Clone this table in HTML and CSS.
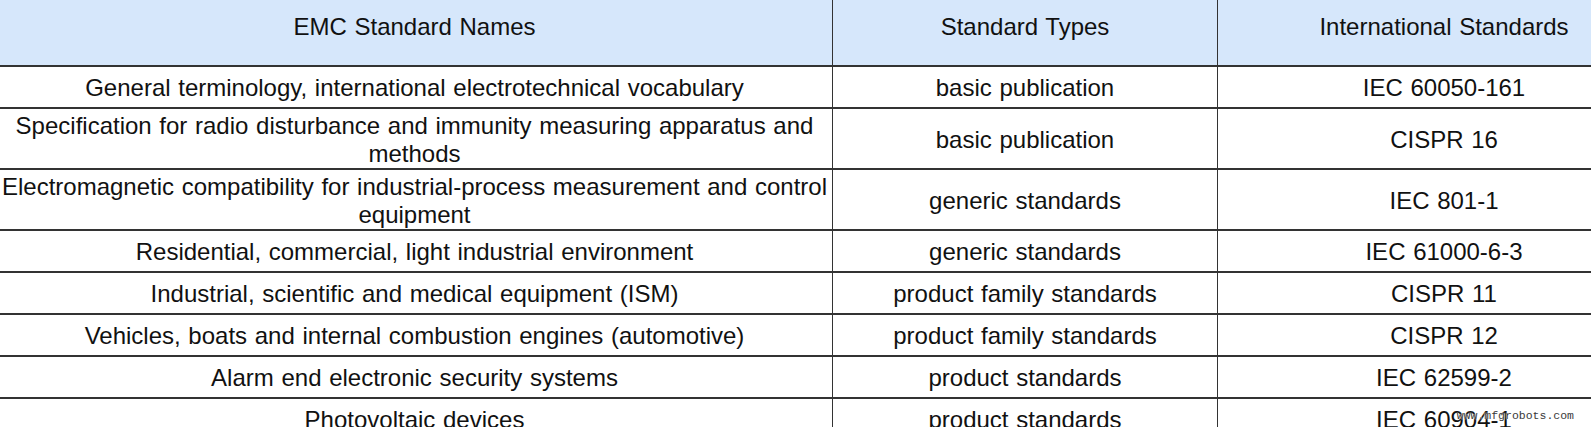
FILE: index.html
```html
<!DOCTYPE html>
<html lang="en">
<head>
<meta charset="utf-8">
<title>EMC Standards</title>
<link rel="stylesheet" href="styles.css">
</head>
<body>
<div class="table" role="table">
  <div class="row head" role="row">
    <div class="cell" role="columnheader">EMC Standard Names</div>
    <div class="cell" role="columnheader">Standard Types</div>
    <div class="cell" role="columnheader">International Standards</div>
  </div>
  <div class="row" role="row">
    <div class="cell">General terminology, international electrotechnical vocabulary</div>
    <div class="cell">basic publication</div>
    <div class="cell">IEC 60050-161</div>
  </div>
  <div class="row double" role="row">
    <div class="cell">Specification for radio disturbance and immunity measuring apparatus and methods</div>
    <div class="cell">basic publication</div>
    <div class="cell">CISPR 16</div>
  </div>
  <div class="row double" role="row">
    <div class="cell">Electromagnetic compatibility for industrial-process measurement and control equipment</div>
    <div class="cell">generic standards</div>
    <div class="cell">IEC 801-1</div>
  </div>
  <div class="row" role="row">
    <div class="cell">Residential, commercial, light industrial environment</div>
    <div class="cell">generic standards</div>
    <div class="cell">IEC 61000-6-3</div>
  </div>
  <div class="row" role="row">
    <div class="cell">Industrial, scientific and medical equipment (ISM)</div>
    <div class="cell">product family standards</div>
    <div class="cell">CISPR 11</div>
  </div>
  <div class="row" role="row">
    <div class="cell">Vehicles, boats and internal combustion engines (automotive)</div>
    <div class="cell">product family standards</div>
    <div class="cell">CISPR 12</div>
  </div>
  <div class="row" role="row">
    <div class="cell">Alarm end electronic security systems</div>
    <div class="cell">product standards</div>
    <div class="cell">IEC 62599-2</div>
  </div>
  <div class="row" role="row">
    <div class="cell">Photovoltaic devices</div>
    <div class="cell">product standards</div>
    <div class="cell">IEC 60904-1</div>
  </div>
</div>
<div class="watermark">www.mfgrobots.com</div>
</body>
</html>
```

FILE: styles.css
```css
html, body {
  margin: 0;
  padding: 0;
  overflow: hidden;
  background: #ffffff;
}

body {
  position: relative;
  width: 1591px;
  height: 427px;
  font-family: "Liberation Sans", Arial, sans-serif;
  color: #111111;
}

.table {
  display: grid;
  grid-template-columns: 835px 385px 453px;
  width: 1673px;
  margin-left: -3px;
}

.row {
  display: contents;
}

.cell {
  box-sizing: border-box;
  display: flex;
  align-items: center;
  justify-content: center;
  text-align: center;
  font-size: 24px;
  line-height: 28px;
  word-spacing: 1px;
  height: 42px;
  padding: 2px 1px 0;
  border-bottom: 2px solid #333333;
}

.cell + .cell {
  border-left: 1px solid #333333;
}

.double .cell {
  height: 61px;
}

.head .cell {
  height: 67px;
  padding: 0 1px 12px;
  background: #d6e7fb;
}

.watermark {
  position: absolute;
  right: 17px;
  bottom: 4px;
  font-family: "Liberation Mono", "Courier New", monospace;
  font-size: 11.5px;
  line-height: 14px;
  color: #3a3a3a;
  text-shadow: 0 0 2px #ffffff, 0 0 1px #ffffff;
}
```
